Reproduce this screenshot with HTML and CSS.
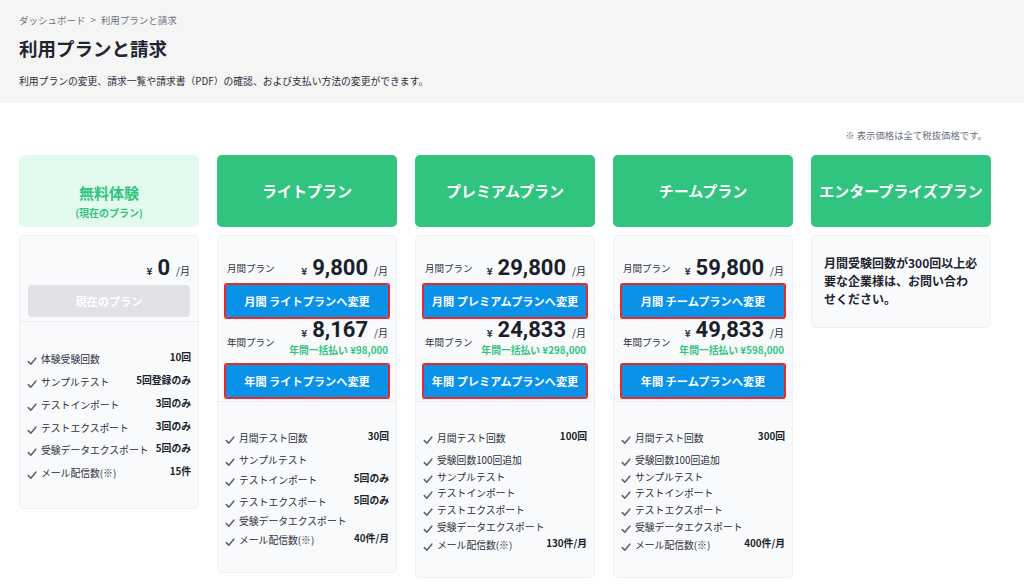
FILE: index.html
```html
<!DOCTYPE html>
<html lang="ja">
<head>
<meta charset="utf-8">
<title>利用プランと請求</title>
<link rel="stylesheet" href="styles.css">
</head>
<body>
<header class="page-head">
  <div class="crumb">ダッシュボード<span class="sep">&gt;</span>利用プランと請求</div>
  <h1 class="title">利用プランと請求</h1>
  <p class="desc">利用プランの変更、請求一覧や請求書（PDF）の確認、および支払い方法の変更ができます。</p>
</header>

<main class="main">
  <p class="note">※ 表示価格は全て税抜価格です。</p>

  <div class="plans">
    <!-- Free -->
    <section class="plan">
      <div class="plan-head free">
        <div class="plan-name">無料体験</div>
        <div class="plan-sub">(現在のプラン)</div>
      </div>
      <div class="plan-body">
        <div class="prices">
          <div class="price-row end">
            <div class="price"><span class="yen">¥</span><span class="num">0</span><span class="per">/月</span></div>
          </div>
          <button class="btn current">現在のプラン</button>
        </div>
        <ul class="feats free-feats">
          <li class="r23"><span class="fl"><svg class="chk" viewBox="0 0 10 10"><path d="M1.3 5.6 L3.8 8.2 L8.8 2.2"/></svg>体験受験回数</span><span class="fv">10回</span></li>
          <li class="r23"><span class="fl"><svg class="chk" viewBox="0 0 10 10"><path d="M1.3 5.6 L3.8 8.2 L8.8 2.2"/></svg>サンプルテスト</span><span class="fv">5回登録のみ</span></li>
          <li class="r23"><span class="fl"><svg class="chk" viewBox="0 0 10 10"><path d="M1.3 5.6 L3.8 8.2 L8.8 2.2"/></svg>テストインポート</span><span class="fv">3回のみ</span></li>
          <li class="r22"><span class="fl"><svg class="chk" viewBox="0 0 10 10"><path d="M1.3 5.6 L3.8 8.2 L8.8 2.2"/></svg>テストエクスポート</span><span class="fv">3回のみ</span></li>
          <li class="r23"><span class="fl"><svg class="chk" viewBox="0 0 10 10"><path d="M1.3 5.6 L3.8 8.2 L8.8 2.2"/></svg>受験データエクスポート</span><span class="fv">5回のみ</span></li>
          <li><span class="fl"><svg class="chk" viewBox="0 0 10 10"><path d="M1.3 5.6 L3.8 8.2 L8.8 2.2"/></svg>メール配信数(※)</span><span class="fv">15件</span></li>
        </ul>
      </div>
    </section>

    <!-- Light -->
    <section class="plan">
      <div class="plan-head">
        <div class="plan-name">ライトプラン</div>
      </div>
      <div class="plan-body">
        <div class="prices">
          <div class="price-row">
            <span class="plabel">月間プラン</span>
            <div class="price"><span class="yen">¥</span><span class="num">9,800</span><span class="per">/月</span></div>
          </div>
          <button class="btn change">月間 ライトプランへ変更</button>
          <div class="price-row year">
            <span class="plabel">年間プラン</span>
            <div class="pright">
              <div class="price"><span class="yen">¥</span><span class="num">8,167</span><span class="per">/月</span></div>
              <div class="lump">年間一括払い ¥98,000</div>
            </div>
          </div>
          <button class="btn change second">年間 ライトプランへ変更</button>
        </div>
        <ul class="feats">
          <li class="r22"><span class="fl"><svg class="chk" viewBox="0 0 10 10"><path d="M1.3 5.6 L3.8 8.2 L8.8 2.2"/></svg>月間テスト回数</span><span class="fv">30回</span></li>
          <li class="r20"><span class="fl"><svg class="chk" viewBox="0 0 10 10"><path d="M1.3 5.6 L3.8 8.2 L8.8 2.2"/></svg>サンプルテスト</span></li>
          <li class="r22"><span class="fl"><svg class="chk" viewBox="0 0 10 10"><path d="M1.3 5.6 L3.8 8.2 L8.8 2.2"/></svg>テストインポート</span><span class="fv">5回のみ</span></li>
          <li class="r19"><span class="fl"><svg class="chk" viewBox="0 0 10 10"><path d="M1.3 5.6 L3.8 8.2 L8.8 2.2"/></svg>テストエクスポート</span><span class="fv">5回のみ</span></li>
          <li class="r19"><span class="fl"><svg class="chk" viewBox="0 0 10 10"><path d="M1.3 5.6 L3.8 8.2 L8.8 2.2"/></svg>受験データエクスポート</span></li>
          <li><span class="fl"><svg class="chk" viewBox="0 0 10 10"><path d="M1.3 5.6 L3.8 8.2 L8.8 2.2"/></svg>メール配信数(※)</span><span class="fv">40件/月</span></li>
        </ul>
      </div>
    </section>

    <!-- Premium -->
    <section class="plan">
      <div class="plan-head">
        <div class="plan-name">プレミアムプラン</div>
      </div>
      <div class="plan-body">
        <div class="prices">
          <div class="price-row">
            <span class="plabel">月間プラン</span>
            <div class="price"><span class="yen">¥</span><span class="num">29,800</span><span class="per">/月</span></div>
          </div>
          <button class="btn change">月間 プレミアムプランへ変更</button>
          <div class="price-row year">
            <span class="plabel">年間プラン</span>
            <div class="pright">
              <div class="price"><span class="yen">¥</span><span class="num">24,833</span><span class="per">/月</span></div>
              <div class="lump">年間一括払い ¥298,000</div>
            </div>
          </div>
          <button class="btn change second">年間 プレミアムプランへ変更</button>
        </div>
        <ul class="feats">
          <li class="r22"><span class="fl"><svg class="chk" viewBox="0 0 10 10"><path d="M1.3 5.6 L3.8 8.2 L8.8 2.2"/></svg>月間テスト回数</span><span class="fv">100回</span></li>
          <li class="r17"><span class="fl"><svg class="chk" viewBox="0 0 10 10"><path d="M1.3 5.6 L3.8 8.2 L8.8 2.2"/></svg>受験回数100回追加</span></li>
          <li class="r16"><span class="fl"><svg class="chk" viewBox="0 0 10 10"><path d="M1.3 5.6 L3.8 8.2 L8.8 2.2"/></svg>サンプルテスト</span></li>
          <li class="r17"><span class="fl"><svg class="chk" viewBox="0 0 10 10"><path d="M1.3 5.6 L3.8 8.2 L8.8 2.2"/></svg>テストインポート</span></li>
          <li class="r17"><span class="fl"><svg class="chk" viewBox="0 0 10 10"><path d="M1.3 5.6 L3.8 8.2 L8.8 2.2"/></svg>テストエクスポート</span></li>
          <li class="r18"><span class="fl"><svg class="chk" viewBox="0 0 10 10"><path d="M1.3 5.6 L3.8 8.2 L8.8 2.2"/></svg>受験データエクスポート</span></li>
          <li><span class="fl"><svg class="chk" viewBox="0 0 10 10"><path d="M1.3 5.6 L3.8 8.2 L8.8 2.2"/></svg>メール配信数(※)</span><span class="fv">130件/月</span></li>
        </ul>
      </div>
    </section>

    <!-- Team -->
    <section class="plan">
      <div class="plan-head">
        <div class="plan-name">チームプラン</div>
      </div>
      <div class="plan-body">
        <div class="prices">
          <div class="price-row">
            <span class="plabel">月間プラン</span>
            <div class="price"><span class="yen">¥</span><span class="num">59,800</span><span class="per">/月</span></div>
          </div>
          <button class="btn change">月間 チームプランへ変更</button>
          <div class="price-row year">
            <span class="plabel">年間プラン</span>
            <div class="pright">
              <div class="price"><span class="yen">¥</span><span class="num">49,833</span><span class="per">/月</span></div>
              <div class="lump">年間一括払い ¥598,000</div>
            </div>
          </div>
          <button class="btn change second">年間 チームプランへ変更</button>
        </div>
        <ul class="feats">
          <li class="r22"><span class="fl"><svg class="chk" viewBox="0 0 10 10"><path d="M1.3 5.6 L3.8 8.2 L8.8 2.2"/></svg>月間テスト回数</span><span class="fv">300回</span></li>
          <li class="r17"><span class="fl"><svg class="chk" viewBox="0 0 10 10"><path d="M1.3 5.6 L3.8 8.2 L8.8 2.2"/></svg>受験回数100回追加</span></li>
          <li class="r16"><span class="fl"><svg class="chk" viewBox="0 0 10 10"><path d="M1.3 5.6 L3.8 8.2 L8.8 2.2"/></svg>サンプルテスト</span></li>
          <li class="r17"><span class="fl"><svg class="chk" viewBox="0 0 10 10"><path d="M1.3 5.6 L3.8 8.2 L8.8 2.2"/></svg>テストインポート</span></li>
          <li class="r17"><span class="fl"><svg class="chk" viewBox="0 0 10 10"><path d="M1.3 5.6 L3.8 8.2 L8.8 2.2"/></svg>テストエクスポート</span></li>
          <li class="r18"><span class="fl"><svg class="chk" viewBox="0 0 10 10"><path d="M1.3 5.6 L3.8 8.2 L8.8 2.2"/></svg>受験データエクスポート</span></li>
          <li><span class="fl"><svg class="chk" viewBox="0 0 10 10"><path d="M1.3 5.6 L3.8 8.2 L8.8 2.2"/></svg>メール配信数(※)</span><span class="fv">400件/月</span></li>
        </ul>
      </div>
    </section>

    <!-- Enterprise -->
    <section class="plan">
      <div class="plan-head">
        <div class="plan-name">エンタープライズプラン</div>
      </div>
      <div class="plan-body ent">
        <p class="ent-text">月間受験回数が300回以上必要な企業様は、お問い合わせください。</p>
      </div>
    </section>
  </div>
</main>
</body>
</html>
```

FILE: styles.css
```css
* { box-sizing: border-box; margin: 0; padding: 0; }

html, body {
  background: #ffffff;
}

body {
  width: 1024px;
  height: 586px;
  overflow: hidden;
  font-family: "Noto Sans CJK JP", "Noto Sans", sans-serif;
  color: #1f2430;
}

/* ---------- page header ---------- */
.page-head {
  background: #f5f5f5;
  height: 103px;
  padding: 13px 19px 0;
}

.crumb {
  font-size: 9.5px;
  line-height: 14px;
  color: #6b7080;
}

.crumb .sep {
  margin: 0 5px;
}

.title {
  margin-top: 8px;
  font-size: 18.5px;
  line-height: 26px;
  font-weight: 700;
  color: #1f2430;
}

.desc {
  margin-top: 13px;
  font-size: 9.8px;
  line-height: 14px;
  color: #2a2f3a;
}

/* ---------- main ---------- */
.main {
  padding: 25px 37px 0 19px;
}

.note {
  font-size: 9.4px;
  line-height: 14px;
  color: #6b7080;
  text-align: right;
}

.plans {
  margin-top: 13px;
  width: 972px;
  display: grid;
  grid-template-columns: repeat(5, 1fr);
  column-gap: 18px;
  align-items: start;
}

.plan {
  display: flex;
  flex-direction: column;
  gap: 8px;
}

.plan-head {
  height: 72px;
  border-radius: 5px;
  background: #30c47f;
  color: #ffffff;
  display: flex;
  flex-direction: column;
  align-items: center;
  padding-top: 26px;
}

.plan-name {
  font-size: 15px;
  line-height: 20px;
  font-weight: 700;
}

.plan-head.free {
  background: #e2fbee;
  color: #30c47f;
  padding-top: 28px;
}

.plan-sub {
  font-size: 10px;
  line-height: 16px;
  font-weight: 700;
  margin-top: 2px;
}

.plan-body {
  background: #f9fafc;
  border: 1px solid #eef0f3;
  border-radius: 5px;
}

/* ---------- prices ---------- */
.prices {
  padding: 19px 8px 4px;
  border-bottom: 1px solid #eceef1;
  display: flex;
  flex-direction: column;
}

.price-row {
  display: flex;
  align-items: center;
  justify-content: space-between;
  padding-left: 1px;
}

.price-row.end {
  justify-content: flex-end;
}

.plabel {
  font-size: 9.5px;
  line-height: 14px;
  color: #2a2f3a;
}

.price {
  display: flex;
  align-items: baseline;
  justify-content: flex-end;
  height: 26px;
}

.yen {
  font-size: 10px;
  line-height: 1;
  font-weight: 700;
  color: #2a2f3a;
  margin-right: 5px;
}

.num {
  font-family: Roboto, "Noto Sans CJK JP", sans-serif;
  font-size: 22px;
  line-height: 26px;
  font-weight: 700;
  color: #1a1f2b;
}

.per {
  font-size: 10px;
  line-height: 1;
  color: #2a2f3a;
  margin-left: 6px;
}

.price-row.year .plabel {
  margin-top: 10px;
}

.pright {
  display: flex;
  flex-direction: column;
  align-items: flex-end;
}

.lump {
  margin-top: 1px;
  font-size: 9.8px;
  line-height: 13px;
  font-weight: 700;
  color: #30c47f;
}

.btn {
  display: block;
  width: 100%;
  height: 32px;
  margin-top: 4px;
  border: 0;
  font-family: inherit;
  font-size: 11.2px;
  font-weight: 700;
  color: #ffffff;
}

.btn.current {
  background: #e1e2e6;
  border-radius: 4px;
}

.btn.change {
  background: #0a92e8;
  border-radius: 1px;
  outline: 2px solid #e8282b;
}

.btn.second {
  margin-top: 8px;
}

/* ---------- features ---------- */
.feats {
  list-style: none;
  padding: 28px 7px 23px 7px;
}

.free-feats {
  padding-top: 29px;
  padding-bottom: 26px;
}

.feats li {
  display: flex;
  justify-content: space-between;
  align-items: flex-start;
  height: 17px;
}

.feats li.r16 { height: 16px; }
.feats li.r17 { height: 17px; }
.feats li.r18 { height: 18px; }
.feats li.r19 { height: 19px; }
.feats li.r20 { height: 20px; }
.feats li.r22 { height: 22px; }
.feats li.r23 { height: 23px; }

.fl {
  display: flex;
  align-items: center;
  font-size: 9.8px;
  line-height: 17px;
  color: #2a2f3a;
  white-space: nowrap;
}

.chk {
  width: 10px;
  height: 10px;
  margin-right: 4px;
  margin-top: 2px;
  flex: none;
}

.chk path {
  fill: none;
  stroke: #5f6472;
  stroke-width: 1.6;
  stroke-linecap: round;
  stroke-linejoin: round;
}

.fv {
  margin-top: -2px;
  font-size: 9.8px;
  line-height: 17px;
  font-weight: 700;
  color: #1a1f2b;
  white-space: nowrap;
}

/* ---------- enterprise ---------- */
.plan-body.ent {
  padding: 18px 12px 19px 12px;
}

.ent-text {
  font-size: 12px;
  line-height: 18px;
  font-weight: 700;
  color: #1f2430;
}
```
